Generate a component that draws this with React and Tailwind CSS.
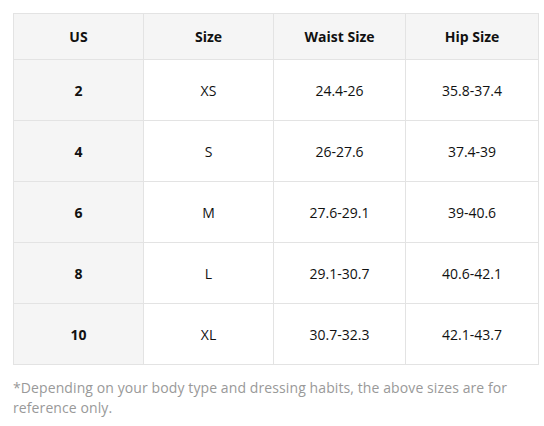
import React from 'react';

const rows = [
  ['2', 'XS', '24.4-26', '35.8-37.4'],
  ['4', 'S', '26-27.6', '37.4-39'],
  ['6', 'M', '27.6-29.1', '39-40.6'],
  ['8', 'L', '29.1-30.7', '40.6-42.1'],
  ['10', 'XL', '30.7-32.3', '42.1-43.7'],
];

export default function App() {
  return (
    <div
      className="w-[544px] h-[426px] bg-white pt-[13px] pl-[13px] pr-[6px]"
      style={{ fontFamily: '"Open Sans", "Noto Sans", sans-serif' }}
    >
      <table className="w-[525px] border-collapse table-fixed text-[14px] text-[#111]">
        <colgroup>
          <col className="w-[130px]" />
          <col className="w-[130px]" />
          <col className="w-[132px]" />
          <col className="w-[133px]" />
        </colgroup>
        <thead>
          <tr className="h-[46px] bg-[#f5f5f5]">
            <th className="border border-[#e3e3e3] font-bold text-center">US</th>
            <th className="border border-[#e3e3e3] font-bold text-center">Size</th>
            <th className="border border-[#e3e3e3] font-bold text-center">Waist Size</th>
            <th className="border border-[#e3e3e3] font-bold text-center">Hip Size</th>
          </tr>
        </thead>
        <tbody>
          {rows.map((r) => (
            <tr key={r[0]} className="h-[61px]">
              <td className="border border-[#e3e3e3] bg-[#f5f5f5] font-bold text-center">{r[0]}</td>
              <td className="border border-[#e3e3e3] text-center">{r[1]}</td>
              <td className="border border-[#e3e3e3] text-center">{r[2]}</td>
              <td className="border border-[#e3e3e3] text-center">{r[3]}</td>
            </tr>
          ))}
        </tbody>
      </table>
      <p className="mt-[13px] text-[14px] leading-[20px] tracking-[0.1px] text-[#999] w-[515px]">
        *Depending on your body type and dressing habits, the above sizes are for reference only.
      </p>
    </div>
  );
}
